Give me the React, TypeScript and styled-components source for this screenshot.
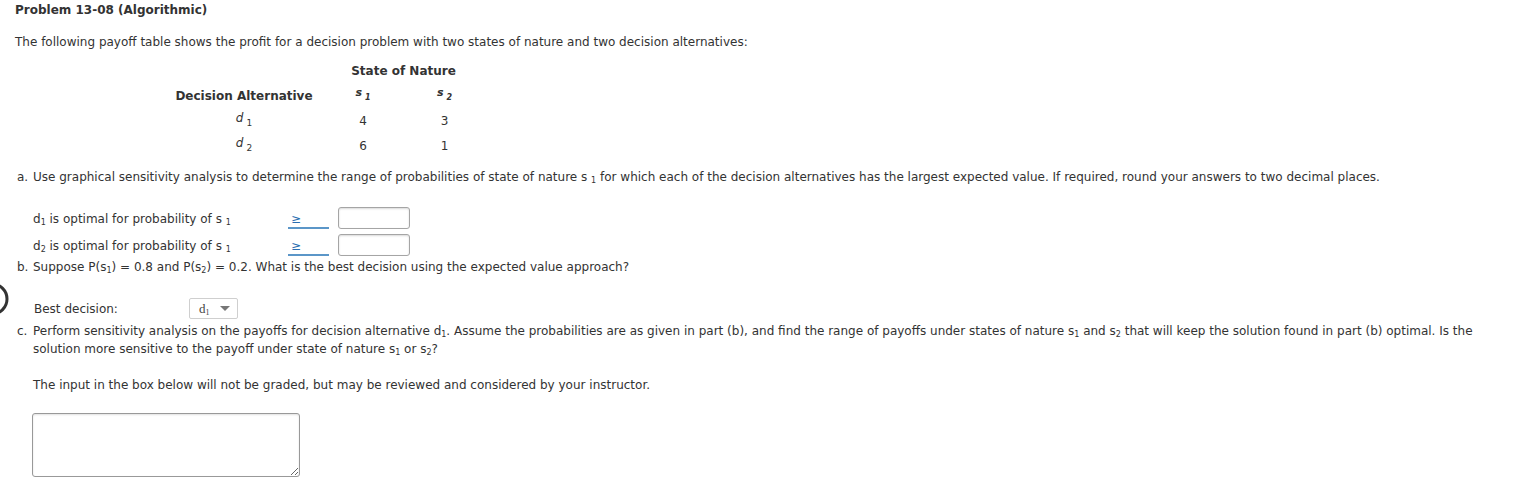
import React from "react";
import styled, { createGlobalStyle } from "styled-components";

const GlobalStyle = createGlobalStyle`
  body {
    margin: 0;
    background: #fff;
    font-family: "DejaVu Sans", Verdana, sans-serif;
    font-size: 12px;
    color: #333;
  }
`;

const Page = styled.div`
  position: relative;
  width: 1526px;
  height: 490px;
  padding: 1px 20px 0 15px;
  box-sizing: border-box;
  line-height: 18px;
`;

const Title = styled.div`
  font-weight: bold;
  height: 18px;
`;

const Intro = styled.p`
  margin: 14px 0 0;
`;

const Table = styled.div`
  display: grid;
  grid-template-columns: 156px 82px 81px;
  grid-auto-rows: 25px;
  align-items: center;
  justify-items: center;
  margin: 7px 0 0 151px;
`;

const Head = styled.div<{ $span?: number }>`
  font-weight: bold;
  grid-column: ${(p) => (p.$span ? `span ${p.$span}` : "auto")};
`;

const Blank = styled.div``;

const StateSym = styled.span`
  font-weight: bold;
  font-style: italic;
  font-size: 11px;
  sub {
    font-size: 8px;
    margin-left: 3px;
  }
`;

const AltSym = styled.span`
  font-style: italic;
  sub {
    font-style: normal;
    font-size: 9px;
    margin-left: 3px;
  }
`;

const Cell = styled.div``;

const Part = styled.div<{ $top: number }>`
  position: relative;
  padding-left: 18px;
  margin-top: ${(p) => p.$top}px;
`;

const Letter = styled.span`
  position: absolute;
  left: 2px;
  top: 0;
`;

const Row = styled.div`
  display: flex;
  align-items: center;
  height: 27px;
`;

const RowLabel = styled.span`
  width: 255px;
  flex: none;
  padding-top: 2px;
`;

const Rel = styled.span`
  width: 41px;
  flex: none;
  color: #2a6db0;
  border-bottom: 2px solid #5b96c8;
  padding: 0 0 2px 3px;
  box-sizing: border-box;
  margin-top: 7px;
  line-height: 12px;
`;

const NumBox = styled.span`
  width: 72px;
  height: 22px;
  margin-left: 9px;
  box-sizing: border-box;
  border: 1px solid #a5a5a5;
  border-radius: 3px;
  box-shadow: inset 0 1px 2px rgba(0, 0, 0, 0.15);
`;

const Sub = styled.sub<{ $gap?: boolean }>`
  font-size: 8px;
  vertical-align: -2px;
  line-height: 1;
  margin-left: ${(p) => (p.$gap ? "3px" : "0")};
`;

const BestRow = styled.div`
  display: flex;
  align-items: center;
  height: 21px;
  margin-top: 22px;
  padding-left: 19px;
`;

const BestLabel = styled.span`
  width: 155px;
  flex: none;
`;

const Select = styled.div`
  width: 49px;
  height: 21px;
  box-sizing: border-box;
  border: 1px solid #cfcfcf;
  border-radius: 2px;
  display: flex;
  align-items: center;
  justify-content: space-between;
  padding: 0 7px 0 9px;
  font-family: "Liberation Serif", serif;
  font-size: 13px;
  color: #444;
`;

const Caret = styled.span`
  width: 0;
  height: 0;
  border-left: 5px solid transparent;
  border-right: 5px solid transparent;
  border-top: 5px solid #777;
`;

const Para = styled.p<{ $top: number }>`
  margin: ${(p) => p.$top}px 0 0 18px;
`;

const TextArea = styled.textarea`
  display: block;
  width: 268px;
  height: 64px;
  margin: 19px 0 0 17px;
  box-sizing: border-box;
  border: 1px solid #999;
  border-radius: 3px;
  box-shadow: inset 0 1px 2px rgba(0, 0, 0, 0.12);
  resize: both;
`;

const Arc = styled.svg`
  position: absolute;
  left: 0;
  top: 282px;
`;

const App: React.FC = () => {
  return (
    <>
      <GlobalStyle />
      <Page>
        <Arc width="12" height="34" viewBox="0 0 12 34">
          <circle cx="-8" cy="17" r="15" fill="none" stroke="#333" strokeWidth="3" />
        </Arc>
        <Title>Problem 13-08 (Algorithmic)</Title>
        <Intro>
          The following payoff table shows the profit for a decision problem with two states of
          nature and two decision alternatives:
        </Intro>
        <Table>
          <Blank />
          <Head $span={2}>State of Nature</Head>
          <Head>Decision Alternative</Head>
          <StateSym>
            s<sub>1</sub>
          </StateSym>
          <StateSym>
            s<sub>2</sub>
          </StateSym>
          <AltSym>
            d<sub>1</sub>
          </AltSym>
          <Cell>4</Cell>
          <Cell>3</Cell>
          <AltSym>
            d<sub>2</sub>
          </AltSym>
          <Cell>6</Cell>
          <Cell>1</Cell>
        </Table>
        <Part $top={10}>
          <Letter>a.</Letter>
          Use graphical sensitivity analysis to determine the range of probabilities of state of
          nature s <Sub>1</Sub> for which each of the decision alternatives has the largest expected
          value. If required, round your answers to two decimal places.
        </Part>
        <Part $top={18}>
          <Row>
            <RowLabel>
              d<Sub>1</Sub> is optimal for probability of s <Sub>1</Sub>
            </RowLabel>
            <Rel>≥</Rel>
            <NumBox />
          </Row>
          <Row>
            <RowLabel>
              d<Sub>2</Sub> is optimal for probability of s <Sub>1</Sub>
            </RowLabel>
            <Rel>≥</Rel>
            <NumBox />
          </Row>
        </Part>
        <Part $top={0}>
          <Letter>b.</Letter>
          Suppose P(s<Sub>1</Sub>) = 0.8 and P(s<Sub>2</Sub>) = 0.2. What is the best decision using
          the expected value approach?
        </Part>
        <BestRow>
          <BestLabel>Best decision:</BestLabel>
          <Select>
            <span>
              d<Sub>1</Sub>
            </span>
            <Caret />
          </Select>
        </BestRow>
        <Part $top={3}>
          <Letter>c.</Letter>
          Perform sensitivity analysis on the payoffs for decision alternative d<Sub>1</Sub>. Assume
          the probabilities are as given in part (b), and find the range of payoffs under states of
          nature s<Sub>1</Sub> and s<Sub>2</Sub> that will keep the solution found in part (b)
          optimal. Is the solution more sensitive to the payoff under state of nature s
          <Sub>1</Sub> or s<Sub>2</Sub>?
        </Part>
        <Para $top={18}>
          The input in the box below will not be graded, but may be reviewed and considered by your
          instructor.
        </Para>
        <TextArea />
      </Page>
    </>
  );
};

export default App;
